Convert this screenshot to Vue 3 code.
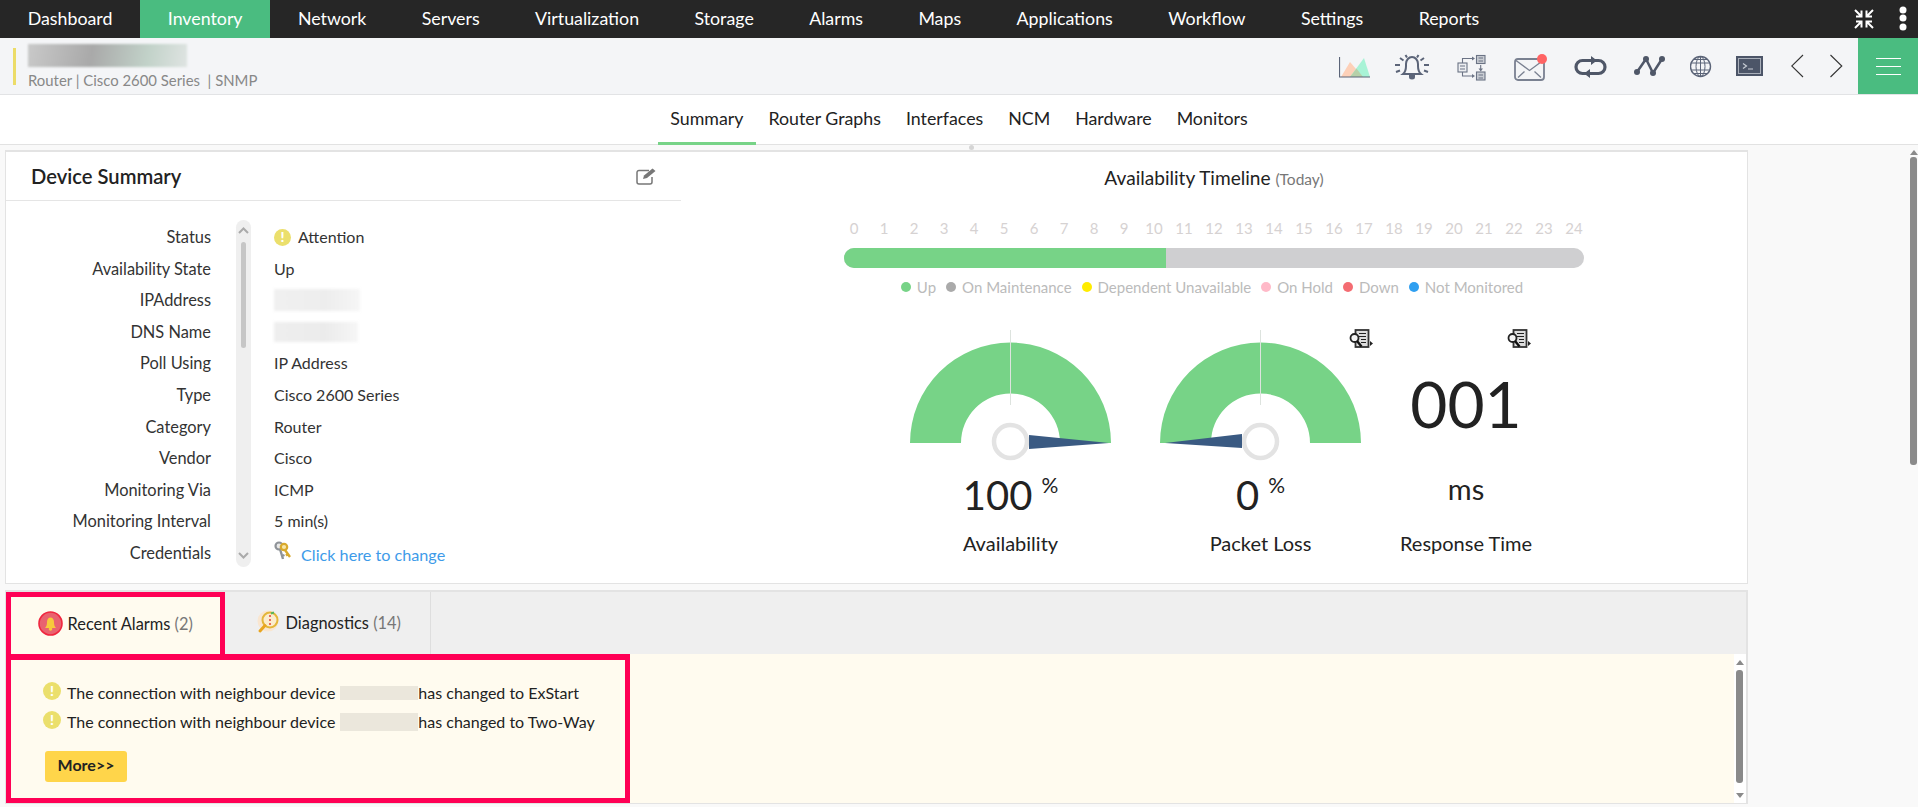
<script setup>
const navItems = ['Dashboard', 'Inventory', 'Network', 'Servers', 'Virtualization', 'Storage', 'Alarms', 'Maps', 'Applications', 'Workflow', 'Settings', 'Reports']
const subTabs = ['Summary', 'Router Graphs', 'Interfaces', 'NCM', 'Hardware', 'Monitors']
const rows = [
  ['Status', 'Attention', 'status'],
  ['Availability State', 'Up'],
  ['IPAddress', '', 'blur-ip'],
  ['DNS Name', '', 'blur-dns'],
  ['Poll Using', 'IP Address'],
  ['Type', 'Cisco 2600 Series'],
  ['Category', 'Router'],
  ['Vendor', 'Cisco'],
  ['Monitoring Via', 'ICMP'],
  ['Monitoring Interval', '5 min(s)'],
  ['Credentials', 'Click here to change', 'cred']
]
const hours = Array.from({ length: 25 }, (_, i) => i)
const legend = [
  ['Up', '#77d387'],
  ['On Maintenance', '#aaaaaa'],
  ['Dependent Unavailable', '#ffec00'],
  ['On Hold', '#ffb9c8'],
  ['Down', '#f46c72'],
  ['Not Monitored', '#2f9ff0']
]
const alarms = [
  { state: 'ExStart', cls: 'ph-a' },
  { state: 'Two-Way', cls: 'ph-b' }
]
</script>

<template>
  <div class="page">
    <nav class="nav">
      <a v-for="n in navItems" :key="n" class="nav-item" :class="{ active: n === 'Inventory' }">{{ n }}</a>
      <svg class="shrink" width="20" height="20" viewBox="0 0 20 20" fill="none" stroke="#fff" stroke-width="2">
        <path d="M1 1l5.500 5.500M7.500 1.500V7.500H2" />
        <path d="M19 1l-5.500 5.500M12.500 1.500V7.500H18" />
        <path d="M1 19l5.500-5.500M2 12.500H7.500V18.500" />
        <path d="M19 19l-5.500-5.500M18 12.500H12.500V18.500" />
      </svg>
      <svg class="dots" width="8" height="26" viewBox="0 0 8 26" fill="#fff">
        <circle cx="4" cy="4" r="3.500" /><circle cx="4" cy="12" r="3.500" /><circle cx="4" cy="21" r="3.500" />
      </svg>
    </nav>

    <header class="head">
      <div class="device">
        <div class="device-blur"></div>
        <div class="device-meta">Router | Cisco 2600 Series &nbsp;| SNMP</div>
      </div>
      <div class="tools">
        <svg width="56" height="56" viewBox="0 0 56 56">
          <polygon points="2,39 11,24 24,39" fill="#fdd0b8" />
          <polygon points="11,39 25,20 31,39" fill="#a8f3d6" />
          <polygon points="11,39 17.500,30.500 24,39" fill="#b6d0a9" />
          <path d="M.5 19V39H31" fill="none" stroke="#5b6478" stroke-width="1.200" />
        </svg>
        <svg width="62" height="56" viewBox="0 0 62 56" fill="none" stroke="#5b6478" stroke-width="2">
          <path d="M8 36c2.500-2 3-4 3-8v-2c0-4 2.800-7 6-7s6 3 6 7v2c0 4 .5 6 3 8z" />
          <path d="M14 37h6v2a3 2.500 0 0 1-6 0z" fill="#5b6478" stroke="none" />
          <path d="M5 20l3.500 2.500M29 20l-3.500 2.500M0 27h5M29 27h5M1 34l4-1.500M33 34l-4-1.500M10.500 17l1.500 2.500M23.500 17L22 19.500" />
        </svg>
        <svg width="57" height="56" viewBox="0 0 57 56" fill="none" stroke="#6b7385" stroke-width="1.100">
          <rect x="1" y="25" width="9" height="9" fill="#eceef1" />
          <rect x="19.500" y="17.500" width="8.500" height="8" fill="#c9cdd3" />
          <rect x="19.500" y="34" width="8.500" height="8" fill="#c9cdd3" />
          <path d="M3 28h5M3 31h5M21.500 20h4.500M21.500 23h4.500M21.500 37h4.500M21.500 40h4.500" stroke-width="1" />
          <path d="M5.500 25v-4.500H15M5.500 34v4H15M23.700 27v5" />
          <path d="M15 18.500l3 2-3 2zM15 36l3 2-3 2zM21.500 30.500h4.500l-2.250 3z" fill="#6b7385" stroke="none" />
        </svg>
        <svg width="60" height="56" viewBox="0 0 60 56" fill="none" stroke="#7a8191" stroke-width="1.800">
          <rect x="1" y="21" width="29" height="21" rx="3" />
          <path d="M2 22.500l13.500 10 13.500-10M4 39.500l6.500-6M27 39.500l-6.500-6" stroke-width="1.300" />
          <circle cx="28" cy="21" r="5" fill="#ff6464" stroke="none" />
        </svg>
        <svg width="60" height="56" viewBox="0 0 60 56" fill="none" stroke="#4f5768" stroke-width="3.200">
          <path d="M18 22.500H8.500a6.500 6.500 0 0 0 0 13H13" />
          <path d="M15 35.500H24.500a6.500 6.500 0 0 0 0-13H20" />
          <path d="M17 18l6 4.500-6 4.500zM16 31l-6 4.500 6 4.500z" fill="#4f5768" stroke="none" />
        </svg>
        <svg width="56" height="56" viewBox="0 0 56 56" fill="#4f5768" stroke="#4f5768">
          <polyline points="3,34 12,21 19,35 28,21" fill="none" stroke-width="2.500" />
          <circle cx="3" cy="34" r="3" stroke="none" /><circle cx="12" cy="21" r="3" stroke="none" />
          <circle cx="19" cy="35" r="3" stroke="none" /><circle cx="28" cy="21" r="3" stroke="none" />
        </svg>
        <svg width="46" height="56" viewBox="0 0 46 56" fill="none" stroke="#5b6478">
          <circle cx="10.500" cy="28.500" r="10" stroke-width="1.400" />
          <ellipse cx="10.500" cy="28.500" rx="4.500" ry="10" />
          <path d="M10.500 18.500v20M1 25h19M1 32h19M3 21.500h15M3 35.500h15" />
        </svg>
        <svg width="55" height="56" viewBox="0 0 55 56" fill="none">
          <rect x="0" y="18" width="27" height="20" fill="#4c5568" />
          <rect x="2.500" y="20.500" width="22" height="15" stroke="#a9afba" stroke-width="1" />
          <path d="M7 25.500l3.500 2.500L7 30.500M12 31h5" stroke="#c7ccd4" stroke-width="1.200" />
        </svg>
        <svg width="39" height="56" viewBox="0 0 39 56" fill="none" stroke="#333" stroke-width="1.100">
          <polyline points="12,17 .7,28 12,39" />
        </svg>
        <svg width="28" height="56" viewBox="0 0 28 56" fill="none" stroke="#333" stroke-width="1.100">
          <polyline points=".5,17 11.800,28 .5,39" />
        </svg>
      </div>
      <div class="burger"><i></i><i></i><i></i></div>
    </header>

    <div class="subtabs">
      <a v-for="t in subTabs" :key="t" class="subtab" :class="{ on: t === 'Summary' }">{{ t }}</a>
    </div>

    <main class="body">
      <div class="splitter"><i></i></div>
      <section class="card">
        <div class="summary">
          <div class="summary-head">
            <h2>Device Summary</h2>
            <svg width="21" height="17" viewBox="0 0 21 17" fill="none" stroke="#777" stroke-width="1.500">
              <path d="M13 2.500H3a2 2 0 0 0-2 2v9.500a2 2 0 0 0 2 2h11a2 2 0 0 0 2-2V9" />
              <path d="M7 11l1-3.500L16.500 0.500l3 2.500-8.500 7z" fill="#777" stroke="none" />
            </svg>
          </div>
          <div class="grid">
            <div class="vbar">
              <svg width="11" height="7" viewBox="0 0 11 7" fill="none" stroke="#aaa" stroke-width="2"><path d="M1 6l4.500-4.500L10 6" /></svg>
              <i></i>
              <svg class="vbar-down" width="11" height="7" viewBox="0 0 11 7" fill="none" stroke="#aaa" stroke-width="2"><path d="M1 1l4.500 4.500L10 1" /></svg>
            </div>
            <template v-for="r in rows" :key="r[0]">
              <div class="lbl">{{ r[0] }}</div>
              <div class="val">
                <template v-if="r[2] === 'status'"><span class="warn lg">!</span><span class="status-text">{{ r[1] }}</span></template>
                <span v-else-if="r[2] && r[2].startsWith('blur')" class="soft" :class="r[2]"></span>
                <template v-else-if="r[2] === 'cred'">
                  <svg class="key" width="18" height="20" viewBox="0 0 18 20">
                    <circle cx="5" cy="5" r="3.500" fill="#e8e8e8" stroke="#8f9398" stroke-width="2.200" />
                    <path d="M6 8l3 10M8 15l2.500-1" stroke="#8f9398" stroke-width="2.400" />
                    <circle cx="10" cy="6" r="3.200" fill="#f7e6a8" stroke="#d9a92c" stroke-width="2.200" />
                    <path d="M11 9l5 7M14 13l-2 1.500" stroke="#d9a92c" stroke-width="2.400" />
                  </svg>
                  <a class="link">{{ r[1] }}</a>
                </template>
                <template v-else>{{ r[1] }}</template>
              </div>
            </template>
          </div>
        </div>

        <div class="avail">
          <div class="avail-title">Availability Timeline <small>(Today)</small></div>
          <div class="timeline">
            <div class="hours"><span v-for="h in hours" :key="h">{{ h }}</span></div>
            <div class="bar"><div class="bar-up"></div></div>
            <div class="legend">
              <span v-for="l in legend" :key="l[0]" class="lg-item"><i :style="{ background: l[1] }"></i>{{ l[0] }}</span>
            </div>
          </div>
          <div class="metrics">
            <div class="metric m1">
              <svg width="201" height="132" viewBox="0 0 201 132">
                <path d="M0 113A100.500 100.500 0 0 1 201 113H150A49.500 49.500 0 0 0 51 113Z" fill="#77d387" />
                <path d="M100.500 0V75" stroke="#dde3de" />
                <circle cx="100.500" cy="111.500" r="16.500" fill="#fff" stroke="#e3e3e3" stroke-width="4.500" />
                <polygon points="119,105 119,119 199,113" fill="#3a5a82" />
              </svg>
              <div class="value">100<sup>%</sup></div>
              <div class="caption">Availability</div>
            </div>
            <div class="metric m2">
              <svg width="201" height="132" viewBox="0 0 201 132">
                <path d="M0 113A100.500 100.500 0 0 1 201 113H150A49.500 49.500 0 0 0 51 113Z" fill="#77d387" />
                <path d="M100.500 0V75" stroke="#dde3de" />
                <circle cx="100.500" cy="111.500" r="16.500" fill="#fff" stroke="#e3e3e3" stroke-width="4.500" />
                <polygon points="82,104 82,118 5,113" fill="#3a5a82" />
              </svg>
              <svg class="report r2" width="24" height="20" viewBox="0 0 24 20">
                <rect x="6.500" y="1" width="13" height="17" fill="#ddd" stroke="#333" stroke-width="1.800" />
                <path d="M10 4.500h7M10 7.500h7M12 10.500h5M12 13.500h5" stroke="#222" stroke-width="1.200" />
                <circle cx="5.500" cy="9" r="4" fill="#f4f4f4" stroke="#222" stroke-width="1.800" />
                <path d="M8 12l4.500 5.500" stroke="#111" stroke-width="2.400" />
                <path d="M21 12l3 2.500-3 2.500z" fill="#222" />
              </svg>
              <div class="value">0<sup>%</sup></div>
              <div class="caption">Packet Loss</div>
            </div>
            <div class="metric m3">
              <svg class="report r3" width="24" height="20" viewBox="0 0 24 20">
                <rect x="6.500" y="1" width="13" height="17" fill="#ddd" stroke="#333" stroke-width="1.800" />
                <path d="M10 4.500h7M10 7.500h7M12 10.500h5M12 13.500h5" stroke="#222" stroke-width="1.200" />
                <circle cx="5.500" cy="9" r="4" fill="#f4f4f4" stroke="#222" stroke-width="1.800" />
                <path d="M8 12l4.500 5.500" stroke="#111" stroke-width="2.400" />
                <path d="M21 12l3 2.500-3 2.500z" fill="#222" />
              </svg>
              <div class="big">001</div>
              <div class="ms">ms</div>
              <div class="caption">Response Time</div>
            </div>
          </div>
        </div>
      </section>

      <section class="panel">
        <div class="tabrow">
          <div class="tab tab-alarm">
            <svg width="25" height="25" viewBox="0 0 25 25">
              <circle cx="12.500" cy="12.500" r="11.500" fill="#e9626f" stroke="#f0263f" stroke-width="1.600" />
              <path d="M7 17c1.500-1.500 2-3 2-6 0-2.500 1.500-4.500 3.500-4.500S16 8.500 16 11c0 3 .5 4.500 2 6z" fill="#f7c93c" />
              <circle cx="12.500" cy="18" r="1.800" fill="#f7c93c" />
            </svg>
            <span>Recent Alarms <em>(2)</em></span>
          </div>
          <div class="tab tab-diag">
            <svg width="24" height="25" viewBox="0 0 24 25">
              <circle cx="11" cy="11" r="10.500" fill="#f9e6d0" />
              <circle cx="13" cy="10" r="7.500" fill="#fbeccd" stroke="#e4b63a" stroke-width="2" />
              <path d="M8 15.500L3 21" stroke="#e9a520" stroke-width="3" stroke-linecap="round" />
              <path d="M13 5v2M13 9v2M13 13v2" stroke="#ea6a5a" stroke-width="2" />
              <path d="M14 3.500l3-1" stroke="#56b45a" stroke-width="2" />
            </svg>
            <span>Diagnostics <em>(14)</em></span>
          </div>
        </div>
        <div class="tabbody">
          <div class="alarms">
            <div v-for="a in alarms" :key="a.state" class="alarm">
              <span class="warn">!</span>
              <span>The connection with neighbour device</span>
              <span class="ph" :class="a.cls"></span>
              <span>has changed to {{ a.state }}</span>
            </div>
            <button class="more" type="button">More&gt;&gt;</button>
          </div>
          <div class="rest"></div>
          <div class="scroll inner">
            <b class="up"></b><i></i><b class="down"></b>
          </div>
        </div>
      </section>
      <div class="scroll outer"><b class="up"></b><i></i></div>
    </main>
  </div>
</template>

<style>
html, body { margin: 0; overflow: hidden; background: #f9f9f9; }
</style>

<style scoped>
.page { width: 1918px; height: 807px; overflow: hidden; font-family: Lato, "Open Sans", sans-serif; color: #222; display: flex; flex-direction: column; }
.nav { height: 38px; flex: none; display: flex; align-items: center; background: #262626; padding-right: 11px; }
.nav-item { height: 38px; line-height: 36px; padding: 0 27.700px; color: #fff; font-size: 17.800px; box-sizing: border-box; white-space: nowrap; }
.nav-item.active { background: #4abc80; }
.shrink { margin-left: auto; }
.dots { margin-left: 25px; }

.head { height: 57px; flex: none; display: flex; background: #f4f5f7; border-bottom: 1px solid #e2e3e5; box-sizing: border-box; }
.device { margin: 6px 0 0 13px; padding-left: 15px; position: relative; flex: 1; }
.device::before { content: ""; position: absolute; left: 0; top: 4px; width: 3px; height: 37px; background: #ecdc68; }
.device-blur { width: 159px; height: 23px; background: linear-gradient(100deg, #c9c9c9, #a9a9a9 40%, #c2d2c9 75%, #dfe4e2); filter: blur(1px); }
.device-meta { margin-top: 4px; font-size: 14.900px; color: #888; white-space: nowrap; }
.tools { display: flex; align-items: flex-start; }
.tools svg { flex: none; display: block; }
.burger { width: 60px; flex: none; background: #4abc80; display: flex; flex-direction: column; justify-content: center; align-items: center; gap: 7px; }
.burger i { display: block; width: 25px; height: 1px; background: #fff; }

.subtabs { height: 50px; flex: none; display: flex; justify-content: center; background: #fff; border-bottom: 1px solid #e2e2e2; box-sizing: border-box; }
.subtab { padding: 0 12.500px; height: 50px; line-height: 46px; font-size: 17.800px; color: #222; box-sizing: border-box; white-space: nowrap; }
.subtab.on { border-bottom: 3px solid #77d387; }

.body { flex: 1; position: relative; background: #f9f9f9; padding: 5px 0 0 5px; min-height: 0; }
.splitter { position: absolute; left: 0; right: 0; top: 0; height: 5px; }
.splitter i { position: absolute; left: 969px; top: 0; width: 5px; height: 5px; border-radius: 50%; background: #d5d5d5; }

.card { width: 1743px; height: 434px; box-sizing: border-box; display: flex; background: #fff; border: 1px solid #e3e3e3; border-width: 2px 1px 1px 1px; }
.summary { width: 675px; flex: none; }
.summary-head { height: 48px; display: flex; align-items: center; justify-content: space-between; padding: 0 24px 0 25px; border-bottom: 1px solid #e5e5e5; }
.summary-head h2 { margin: 0; font-size: 20.200px; font-weight: 600; color: #222; }
.grid { display: grid; grid-template-columns: 205px 25px 15px 1fr; grid-auto-rows: 31.600px; padding-top: 21px; }
.lbl { grid-column: 1; text-align: right; font-size: 16.400px; line-height: 30px; color: #333; white-space: nowrap; }
.val { grid-column: 4; padding-left: 23px; font-size: 16px; line-height: 30px; color: #333; display: flex; align-items: center; white-space: nowrap; height: 30px; }
.status-text { margin-top: -1px; }
.vbar { grid-column: 3; grid-row: 1 / span 11; height: 347px; margin-top: -2px; background: #efefef; border-radius: 8px; display: flex; flex-direction: column; align-items: center; padding-top: 7px; box-sizing: border-box; }
.vbar i { display: block; width: 5px; height: 106px; margin-top: 8px; border-radius: 3px; background: #c6c6c6; }
.vbar-down { margin-top: auto; margin-bottom: 8px; }
.warn { display: inline-flex; align-items: center; justify-content: center; flex: none; width: 17px; height: 17px; border-radius: 50%; background: #ebdf6c; color: #fff; font-size: 14px; font-weight: 900; line-height: 1; }
.warn.lg { margin-right: 7px; }
.soft { display: block; filter: blur(1.500px); }
.blur-ip { width: 86px; height: 22px; background: linear-gradient(90deg, #f0f0f0, #ededed 60%, #f6f6f6); }
.blur-dns { width: 84px; height: 20px; background: linear-gradient(90deg, #eeeeee, #ebebeb 60%, #f6f6f6); }
.key { margin: -4px 9px 0 0; flex: none; }
.link { color: #3d9be9; margin-top: 4px; font-size: 16.200px; }

.avail { flex: 1; min-width: 0; position: relative; }
.avail-title { text-align: center; margin-top: 15px; font-size: 19.100px; line-height: 22px; color: #222; }
.avail-title small { font-size: 15.500px; color: #777; }
.timeline { width: 740px; margin: 0 auto; padding-top: 27.500px; }
.hours { display: flex; justify-content: space-between; font-size: 15px; line-height: 20px; color: #d6d2d2; margin: 0 -5px; }
.hours span { width: 30px; text-align: center; }
.bar { height: 20px; border-radius: 10px; background: #cfcfd1; overflow: hidden; margin-top: 10px; }
.bar-up { width: 322px; height: 100%; background: #77d387; }
.legend { display: flex; justify-content: center; gap: 10px; margin-top: 9px; padding-right: 4px; font-size: 15px; line-height: 20px; color: #bbb; }
.lg-item { display: flex; align-items: center; gap: 6px; }
.lg-item i { display: block; width: 10px; height: 10px; border-radius: 50%; }

.metrics { display: flex; margin: 33px 0 0 229px; }
.metric { position: relative; text-align: center; }
.m1, .m2 { width: 201px; }
.m2 { margin-left: 49px; }
.m3 { width: 150px; margin-left: 30px; }
.metric svg:not(.report) { display: block; }
.report { position: absolute; top: -1px; }
.r2 { left: 189px; }
.r3 { left: 116px; }
.value { font-size: 40px; line-height: 46px; margin-top: 10.500px; color: #222; }
.value sup { font-size: 21px; line-height: 0; margin-left: 9px; vertical-align: 17.500px; }
.caption { font-size: 20px; line-height: 22px; margin-top: 14px; color: #222; white-space: nowrap; }
.big { font-size: 64px; line-height: 74px; margin-top: 37px; color: #222; }
.ms { font-size: 29px; line-height: 40px; margin-top: 28px; color: #222; }
.m3 .caption { margin-top: 23px; }

.panel { width: 1743px; height: 214px; margin-top: 6px; box-sizing: border-box; border: 1px solid #e3e3e3; border-width: 2px 2px 1px 1px; background: #efefef; }
.tabrow { height: 62px; display: flex; }
.tab { display: flex; align-items: center; box-sizing: border-box; font-size: 16.400px; color: #222; padding-bottom: 2px; white-space: nowrap; }
.tab em { font-style: normal; color: #777; }
.tab span { margin-left: 4.500px; }
.tab-alarm { width: 219px; height: 62px; padding-left: 27px; padding-bottom: 4px; background: #fffbef; border: 5px solid #ff0055; border-bottom: 0; }
.tab-diag { width: 206px; padding-left: 32px; border-right: 1px solid #dedede; }
.tabbody { height: 149px; display: flex; position: relative; background: #fff; }
.alarms { width: 624px; height: 149px; box-sizing: border-box; flex: none; background: #fffbef; border: 5px solid #ff0055; border-top-width: 6px; padding: 18px 0 0 32px; }
.alarm { display: flex; align-items: center; height: 29px; font-size: 16px; color: #222; white-space: nowrap; }
.alarm .warn { width: 18px; height: 18px; margin-right: 6px; margin-top: -4px; }
.ph { display: block; background: #ebe7dc; margin: 0 0 0 5px; width: 78px; }
.ph-a { height: 14px; }
.ph-b { height: 18px; }
.more { display: block; width: 82px; height: 31px; margin: 15px 0 0 2px; padding: 0 0 4px; border: 0; border-radius: 3px; background: #ffd54a; font: 700 16px Lato, sans-serif; color: #222; }
.rest { flex: 1; background: #fffbef; margin-right: 12px; }

.scroll { position: absolute; display: flex; flex-direction: column; align-items: center; width: 7px; }
.scroll i { display: block; width: 7px; border-radius: 3px; background: #8a8a8a; }
.scroll b { display: block; width: 0; height: 0; border-left: 4px solid transparent; border-right: 4px solid transparent; }
.scroll .up { border-bottom: 5px solid #8a8a8a; }
.scroll .down { border-top: 5px solid #8a8a8a; margin-top: 10px; }
.outer { left: 1910px; top: 5px; }
.outer i { height: 308px; margin-top: 2px; }
.inner { right: 3px; top: 6px; }
.inner i { height: 113px; margin-top: 5px; }
</style>
